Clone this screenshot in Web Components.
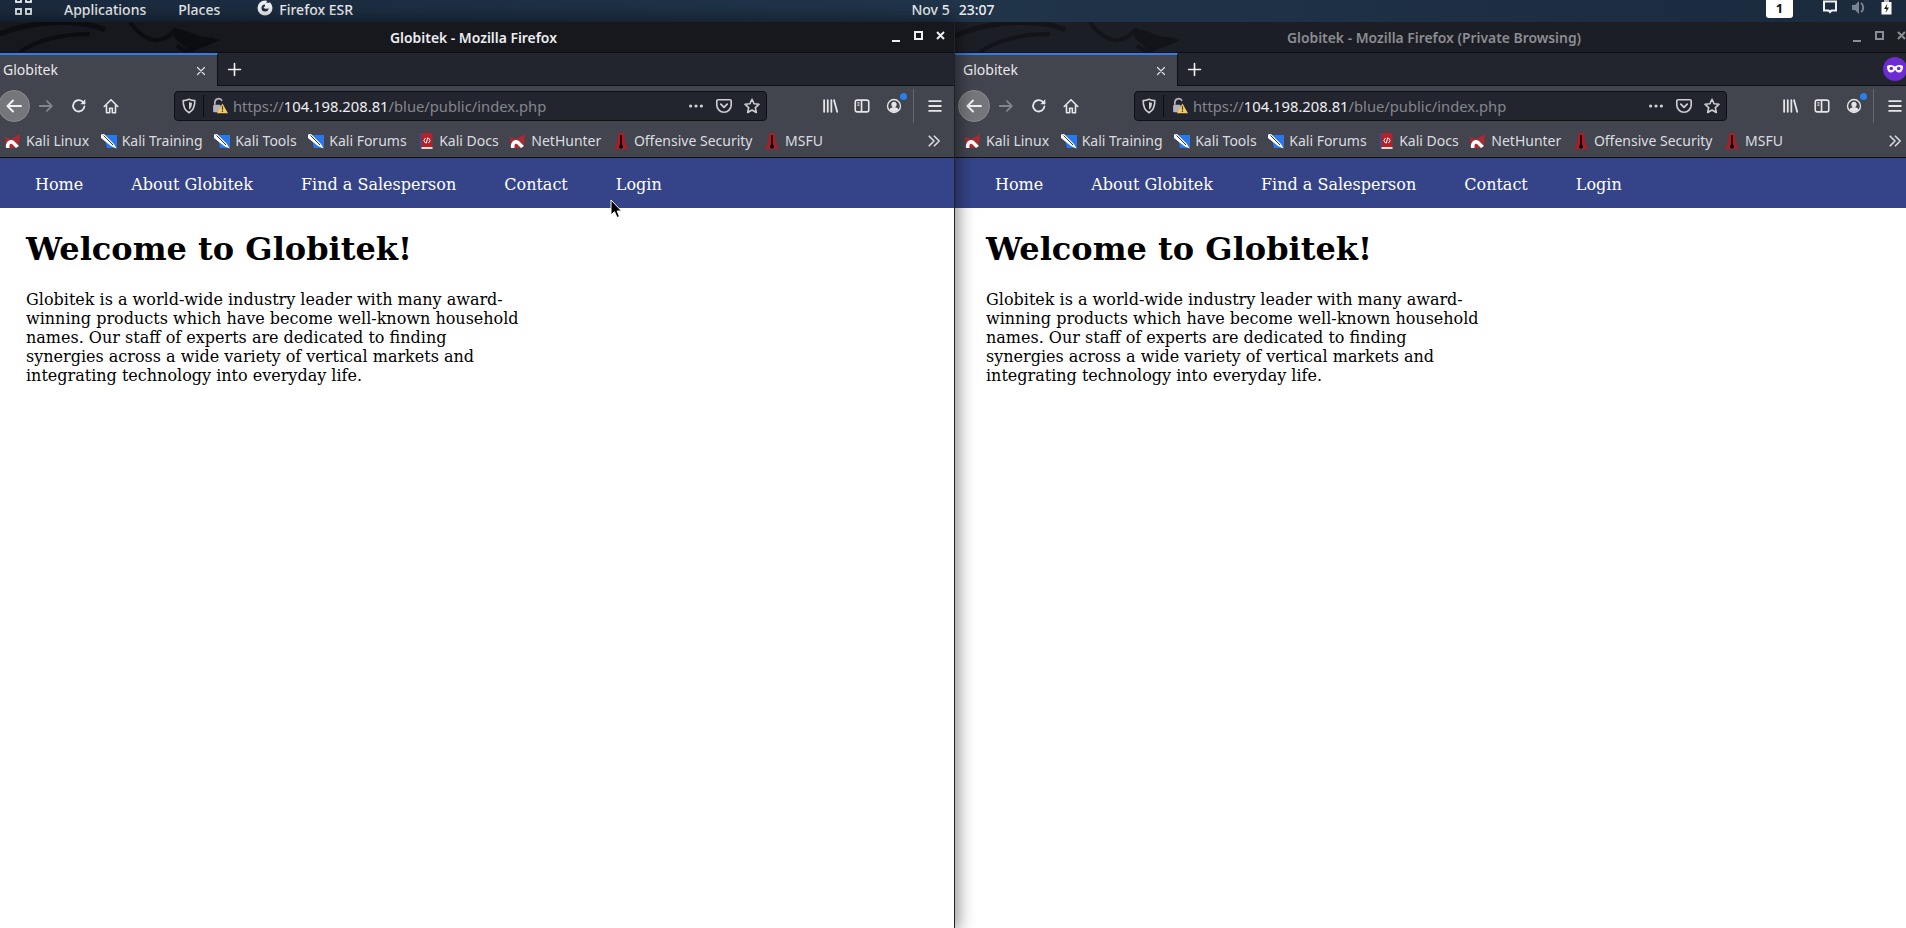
<!DOCTYPE html>
<html><head><meta charset="utf-8"><title>Globitek</title>
<style>
html,body{margin:0;padding:0;width:1906px;height:928px;overflow:hidden;background:#1c2a3c}
desktop-screen{display:block}
</style></head><body>
<desktop-screen>
  <top-panel></top-panel>
  <browser-window style="left:955px;top:22px;z-index:1" wintitle="Globitek - Mozilla Firefox (Private Browsing)" private></browser-window>
  <browser-window style="left:-5px;top:22px;z-index:2" wintitle="Globitek - Mozilla Firefox" active></browser-window>
  <mouse-cursor></mouse-cursor>
</desktop-screen>
<script>
const UI='"Noto Sans","Open Sans",sans-serif';
const ICONS={
 back:'<path d="M17 10H4M9 4.500 3.500 10 9 15.500" fill="none" stroke="currentColor" stroke-width="2" stroke-linecap="round" stroke-linejoin="round"/>',
 forward:'<path d="M3 10h13M11 4.500 16.500 10 11 15.500" fill="none" stroke="currentColor" stroke-width="2" stroke-linecap="round" stroke-linejoin="round"/>',
 reload:'<path d="M16 10.500A6.300 6.300 0 1 1 13.800 5L16 7" fill="none" stroke="currentColor" stroke-width="2" stroke-linecap="round"/><path d="M17 2.500V8h-5.500z" fill="currentColor"/>',
 home:'<path d="M2.500 10.500 10 3l7.500 7.500M5 9v8.500h3.500V12.500h3v5H15V9" fill="none" stroke="currentColor" stroke-width="1.800" stroke-linejoin="round" stroke-linecap="round"/>',
 shield:'<path d="M10 2.500c2.500 1.300 4.500 1.500 6.500 1.500 0 6.500-1.500 11-6.500 13.500C5 15 3.500 10.500 3.500 4c2 0 4-.2 6.500-1.500z" fill="none" stroke="currentColor" stroke-width="1.800" stroke-linejoin="round"/><path d="M10 5.500c1.200.6 2.200.8 3.300.8 0 3.700-.9 6-3.300 7.700z" fill="currentColor"/>',
 lock:'<path d="M4.500 9V6.500a4.500 4.500 0 0 1 8.500-2" fill="none" stroke="#b4b5ba" stroke-width="2"/><rect x="2.500" y="9" width="9" height="9" rx="1.500" fill="#b4b5ba"/><path d="M13.500 7.500 20 19H7z" fill="#f7c95c"/><path d="M13.500 11v4M13.500 16v1.500" stroke="#4a3a10" stroke-width="1.400"/>',
 dots:'<circle cx="4" cy="10" r="1.800" fill="currentColor"/><circle cx="10" cy="10" r="1.800" fill="currentColor"/><circle cx="16" cy="10" r="1.800" fill="currentColor"/>',
 pocket:'<path d="M3.500 3h13A1.500 1.500 0 0 1 18 4.500V9a8 8 0 0 1-16 0V4.500A1.500 1.500 0 0 1 3.500 3z" fill="none" stroke="currentColor" stroke-width="1.800"/><path d="M6.500 8 10 11.500 13.500 8" fill="none" stroke="currentColor" stroke-width="2" stroke-linecap="round" stroke-linejoin="round"/>',
 star:'<path d="M10 2.500l2.300 5 5.400.6-4 3.700 1.100 5.400-4.800-2.700-4.800 2.700 1.100-5.400-4-3.700 5.400-.6z" fill="none" stroke="currentColor" stroke-width="1.800" stroke-linejoin="round"/>',
 library:'<path d="M3.500 3.500v13M7.500 3.500v13M11.500 3.500v13M14.500 3.500l3.500 13" fill="none" stroke="currentColor" stroke-width="2" stroke-linecap="round"/>',
 sidebar:'<rect x="2.500" y="3.500" width="15" height="13" rx="2" fill="none" stroke="currentColor" stroke-width="1.800"/><path d="M9.500 3.500v13" stroke="currentColor" stroke-width="1.800"/><path d="M4.800 6.500h2.400M4.800 9h2.400" stroke="currentColor" stroke-width="1.400"/>',
 account:'<circle cx="10" cy="10" r="7.200" fill="none" stroke="currentColor" stroke-width="1.500"/><circle cx="10" cy="8.300" r="2.900" fill="currentColor"/><path d="M4.800 14.300c1-2.500 3-3.300 5.200-3.300s4.200.8 5.200 3.300A7 7 0 0 1 10 16.800a7 7 0 0 1-5.200-2.500z" fill="currentColor"/>',
 menu:'<path d="M3.500 4.500h13M3.500 10h13M3.500 15.500h13" stroke="currentColor" stroke-width="2" stroke-linecap="round"/>',
 more:'<path d="M4 4l6 6-6 6M10.500 4l6 6-6 6" fill="none" stroke="currentColor" stroke-width="2" stroke-linecap="round" stroke-linejoin="round"/>',
 close:'<path d="M5 5l10 10M15 5 5 15" stroke="currentColor" stroke-width="1.800" stroke-linecap="round"/>',
 plus:'<path d="M10 3v14M3 10h14" stroke="currentColor" stroke-width="1.900" stroke-linecap="round"/>',
 kali:'<path d="M0 4 6 6l9-5-1 11-4 3H1z" fill="#a92a33"/><path d="M1 15C0 9 5 5 9 8l5 5-3 2-4-4C5.500 10 4 11 4.500 15z" fill="#fff"/>',
 tool:'<path d="M3 2h13v13H6z" fill="#2a79ec"/><path d="M0 1.500 3 1 13 11l2.500 4.500L10 13 0 5z" fill="#fff"/><path d="M2.500 2.500l9.500 9.500" stroke="#334" stroke-width="1"/>',
 docs:'<rect x="1.500" y="0" width="2.500" height="16" fill="#3f4a86"/><rect x="3.500" y="0" width="11" height="15" fill="#b3222a"/><rect x="3.500" y="14" width="11" height="2" fill="#ddd"/><path d="M7.500 5 5.800 7.500l1.700 2.500M10.500 5l1.700 2.500-1.700 2.500M9.800 4.500 8.200 10.500" fill="none" stroke="#fff" stroke-width="1"/>',
 offsec:'<path d="M5 0h6l.5 8 3.500 8H1l3.500-8z" fill="#a81f2a"/><path d="M8 2v12" stroke="#000" stroke-width="1.600"/><circle cx="8" cy="13.500" r="2" fill="#000"/>'
};
function define(name,cls){customElements.define(name,cls)}

define('line-icon',class extends HTMLElement{
 connectedCallback(){
  const s=this.attachShadow({mode:'open'});
  const sz=this.getAttribute('size')||18;
  const vb=/kali|tool|docs|offsec/.test(this.getAttribute('name'))?'0 0 16 16':'0 0 20 20';
  s.innerHTML=`<style>:host{display:inline-flex;flex:none;width:${sz}px;height:${sz}px;color:inherit}svg{display:block;width:100%;height:100%}</style><svg viewBox="${vb}">${ICONS[this.getAttribute('name')]}</svg>`;
 }
});

define('top-panel',class extends HTMLElement{
 connectedCallback(){
  this.attachShadow({mode:'open'}).innerHTML=`<style>
  :host{display:grid;grid-template-columns:1fr auto 1fr;align-items:start;height:22px;box-sizing:border-box;color:#eef0f2;
    font:500 14px/19px ${UI};background:linear-gradient(90deg,#1b2a3e,#20344a 50%,#1b2a3d);overflow:hidden}
  span{white-space:nowrap}
  .l,.r{display:flex;align-items:flex-start}
  .l{padding-left:15px}
  .r{justify-content:flex-end}
  .grid{width:17px;height:16px;flex:none;margin-right:32px}
  .fx{width:16px;height:16px;margin-right:6px;flex:none}
  .a{margin-right:32px}.b{margin-right:37px}
  .clock b{font-weight:500;margin-left:9px}
  .ws{width:27px;height:18px;background:#fff;color:#111;border-radius:0 0 3px 3px;font-weight:700;text-align:center;line-height:17px;font-size:13px;margin-right:30px;flex:none}
  svg{display:block}
  .tray{display:flex;gap:15px;margin-right:14px;align-items:flex-start}
  </style>
  <div class="l">
  <svg class="grid" viewBox="0 0 17 16"><g fill="none" stroke="#eef0f2" stroke-width="1.800"><rect x="1" y="-3" width="5" height="5"/><rect x="11" y="-3" width="5" height="5"/><rect x="1" y="9" width="5" height="5"/><rect x="11" y="9" width="5" height="5"/></g></svg>
  <span class="a">Applications</span><span class="b">Places</span>
  <svg class="fx" viewBox="0 0 16 16"><circle cx="8" cy="8" r="7.500" fill="#eef0f2"/><path d="M8 4.500a3.500 3.500 0 1 0 3.500 3.500C10 9.500 7 9 6.500 7c1 .2 1.500-.5 1.500-2.500zM11 0c1 1 1.500 2 1.500 3L9 2.500z" fill="#1d2d42"/></svg>
  <span>Firefox ESR</span>
  </div>
  <span class="clock">Nov 5<b>23:07</b></span>
  <div class="r">
  <div class="ws">1</div>
  <div class="tray">
   <svg width="14" height="15" viewBox="0 0 14 15"><path d="M1 1.500h12v9H8.500L7 12l-1.500-1.500H1z" fill="none" stroke="#eef0f2" stroke-width="2"/></svg>
   <svg width="14" height="15" viewBox="0 0 14 15" style="opacity:.45"><path d="M0 5h3l4-4v13l-4-4H0z" fill="#eef0f2"/><path d="M9 3c3 2 3 7 0 9" fill="none" stroke="#eef0f2" stroke-width="2"/></svg>
   <svg width="11" height="15" viewBox="0 0 11 15"><rect x="3" y="0" width="5" height="2" fill="#bbb"/><rect x="0.500" y="2" width="10" height="12.500" fill="#fff"/><path d="M6.500 3.500 3 9h2.500L4.500 13 8 7.500H5.500z" fill="#1a1a1a"/></svg>
  </div></div>`;
 }
});

define('title-bar',class extends HTMLElement{
 connectedCallback(){
  const on=this.hasAttribute('active');
  this.attachShadow({mode:'open'}).innerHTML=`<style>
  :host{display:flex;align-items:center;justify-content:center;height:31px;box-sizing:border-box;border-bottom:1px solid #0c0d10;position:relative;overflow:hidden;
    background:${on?'#16181e':'#1c1e25'};color:${on?'#eceef0':'#8b8d92'};font:600 13.9px/18px ${UI}}
  .t{transform:translateX(-1px);margin-top:1px;position:relative}
  .d{position:absolute;left:0;top:0}
  .btns{position:absolute;right:5px;top:0;display:flex;height:30px;align-items:center;gap:6px;color:${on?'#eceef0':'#8b8d92'}}
  .btns svg{width:16px;height:16px;display:block}
  </style>
  <svg class="d" width="250" height="30" viewBox="0 0 250 30" fill="none" stroke="${on?'#0c0d11':'#131419'}"><path d="M0 14C40 -4 90 -2 110 8" stroke-width="5"/><path d="M25 30C45 16 70 12 95 12" stroke-width="4"/><path d="M135 0c12 18 30 26 45 8l16 8 24 2-12 5-16 7-10-6" stroke-width="4"/><path d="M178 7l12 2 18 7 16 2-14 6-16 4-14-12z" fill="${on?'#0c0d11':'#131419'}"/></svg>
  <span class="t">${this.getAttribute('wintitle')}</span>
  <div class="btns">
   <svg viewBox="0 0 16 16"><path d="M3 12h8" stroke="currentColor" stroke-width="2"/></svg>
   <svg viewBox="0 0 16 16"><rect x="4" y="3" width="7" height="7" fill="none" stroke="currentColor" stroke-width="2"/></svg>
   <svg viewBox="0 0 16 16"><path d="M4 3l7 7M11 3l-7 7" stroke="currentColor" stroke-width="2"/></svg>
  </div>`;
 }
});

define('tab-strip',class extends HTMLElement{
 connectedCallback(){
  const priv=this.hasAttribute('private');
  this.attachShadow({mode:'open'}).innerHTML=`<style>
  :host{display:flex;height:33px;background:#23252e;color:#f2f2f3;position:relative;font:13.3px/16px ${UI}}
  .tab{width:223px;box-sizing:border-box;background:#42444e;border-top:2px solid #2a7ef0;display:flex;align-items:center;padding:0 8px;border-right:1px solid #111}
  .tab span{flex:1;color:#e8e8ea;font-size:14px;margin-top:-2px}
  .tab line-icon{color:#dcdcde;margin-right:1px}
  .new{margin:0 0 0 8px;display:flex;align-items:center;color:#eee}
  .line{position:absolute;left:223px;right:0;bottom:0;height:1px;background:#0f1014}
  .mask{position:absolute;left:928px;top:4px;width:24px;height:24px;border-radius:50%;background:#6d2bd2}
  .mask svg{display:block}
  </style>
  <div class="tab"><span>Globitek</span><line-icon name="close" size="14"></line-icon></div>
  <div class="new"><line-icon name="plus" size="17"></line-icon></div>
  <div class="line"></div>
  ${priv?'<div class="mask"><svg width="24" height="24" viewBox="0 0 24 24"><path d="M4 9c3-1.500 5-1 8 .5 3-1.500 5-2 8-.5 0 5-2 6.500-4 6.500S13 14 12 13c-1 1-2 2.500-4 2.500S4 14 4 9z" fill="#fff"/><circle cx="8.300" cy="11.500" r="1.800" fill="#6d2bd2"/><circle cx="15.700" cy="11.500" r="1.800" fill="#6d2bd2"/></svg></div>':''}`;
 }
});

define('url-bar',class extends HTMLElement{
 connectedCallback(){
  this.attachShadow({mode:'open'}).innerHTML=`<style>
  :host{display:flex;align-items:center;width:593px;height:30px;box-sizing:border-box;background:#23252e;border:1px solid #0e0f13;border-radius:4px;color:#cfcfd2;font:14.75px/18px ${UI};flex:none;padding-left:5px}
  .sep{width:1px;height:22px;background:#0c0d10;margin:0 7px 0 5px}
  .u{flex:1;white-space:nowrap;color:#85868b;margin-left:5px}
  .u b{font-weight:400;color:#f0f0f2}
  .r{display:flex;align-items:center;gap:10px;margin-right:5px}
  </style>
  <line-icon name="shield" size="18"></line-icon><div class="sep"></div>
  <line-icon name="lock" size="17"></line-icon>
  <span class="u">https://<b>104.198.208.81</b>/blue/public/index.php</span>
  <div class="r"><line-icon name="dots" size="18"></line-icon><line-icon name="pocket" size="18"></line-icon><line-icon name="star" size="18"></line-icon></div>`;
 }
});

define('nav-toolbar',class extends HTMLElement{
 connectedCallback(){
  this.attachShadow({mode:'open'}).innerHTML=`<style>
  :host{display:flex;align-items:center;height:39px;box-sizing:border-box;padding:0 0 0 3px;color:#e6e6e8}
  .back{width:32px;height:32px;border-radius:50%;background:#75767c;border:1px solid #8b8c91;box-sizing:border-box;display:flex;align-items:center;justify-content:center;flex:none;margin-right:7px;color:#f0f0f2}
  .fwd{color:#83848a;margin-right:15px}
  .rel{margin-right:14px}
  .home{margin-right:54px}
  url-bar{margin-right:54px}
  .acct{position:relative;display:flex}
  .acct i{position:absolute;right:-4px;top:-4px;width:7px;height:7px;border-radius:50%;background:#2a7ef0}
  .lib{margin-right:14px}.sb{margin-right:14px}
  .div{width:1px;height:34px;background:#666870;margin:0 12px 0 10px}
  </style>
  <div class="back"><line-icon name="back" size="20"></line-icon></div>
  <line-icon class="fwd" name="forward" size="18"></line-icon>
  <line-icon class="rel" name="reload" size="18"></line-icon>
  <line-icon class="home" name="home" size="18"></line-icon>
  <url-bar></url-bar>
  <line-icon class="lib" name="library" size="18"></line-icon>
  <line-icon class="sb" name="sidebar" size="18"></line-icon>
  <div class="acct"><line-icon name="account" size="18"></line-icon><i></i></div>
  <div class="div"></div>
  <line-icon name="menu" size="18"></line-icon>`;
 }
});

define('book-mark',class extends HTMLElement{
 connectedCallback(){
  this.attachShadow({mode:'open'}).innerHTML=`<style>
  :host{display:inline-flex;align-items:center;gap:5px;white-space:nowrap;flex:none}
  </style><line-icon name="${this.getAttribute('icon')}" size="16"></line-icon><slot></slot>`;
 }
});

define('bookmark-bar',class extends HTMLElement{
 connectedCallback(){
  this.attachShadow({mode:'open'}).innerHTML=`<style>
  :host{display:flex;align-items:center;height:33px;box-sizing:border-box;padding-left:10px;gap:11.6px;border-bottom:1px solid #0f1014;color:#dcdde0;font:14px/16px ${UI};position:relative}
  .more{margin-left:auto;margin-right:12px;color:#dcdde0}
  </style>
  <book-mark icon="kali">Kali Linux</book-mark>
  <book-mark icon="tool">Kali Training</book-mark>
  <book-mark icon="tool">Kali Tools</book-mark>
  <book-mark icon="tool">Kali Forums</book-mark>
  <book-mark icon="docs">Kali Docs</book-mark>
  <book-mark icon="kali">NetHunter</book-mark>
  <book-mark icon="offsec">Offensive Security</book-mark>
  <book-mark icon="offsec">MSFU</book-mark>
  <line-icon class="more" name="more" size="16"></line-icon>`;
 }
});

define('site-nav',class extends HTMLElement{
 connectedCallback(){
  this.attachShadow({mode:'open'}).innerHTML=`<style>
  :host{display:flex;height:50px;align-items:center;box-sizing:border-box;background:#354488;padding:2px 0 0 40px;gap:48px;color:#fff;font:16px/19px "DejaVu Serif",serif}
  </style><span>Home</span><span>About Globitek</span><span>Find a Salesperson</span><span>Contact</span><span>Login</span>`;
 }
});

define('page-content',class extends HTMLElement{
 connectedCallback(){
  this.attachShadow({mode:'open'}).innerHTML=`<style>
  :host{display:block;padding:0 0 0 31px;color:#000;font:16px/19px "DejaVu Serif",serif}
  h1{font:700 32px/38px "DejaVu Serif",serif;margin:22px 0 0}
  p{margin:22px 0 0;width:500px}
  </style><h1>Welcome to Globitek!</h1><p>Globitek is a world-wide industry leader with many award-winning products which have become well-known household names. Our staff of experts are dedicated to finding synergies across a wide variety of vertical markets and integrating technology into everyday life.</p>`;
 }
});

define('browser-window',class extends HTMLElement{
 connectedCallback(){
  const on=this.hasAttribute('active'),pr=this.hasAttribute('private');
  this.attachShadow({mode:'open'}).innerHTML=`<style>
  :host{display:flex;flex-direction:column;position:absolute;width:960px;height:906px;background:#fff;box-sizing:border-box;
    ${on?'box-shadow:0 0 16px 3px rgba(0,0,0,.45);border-right:1px solid #222;':''}}
  .chrome{background:#42444e}
  </style>
  <title-bar wintitle="${this.getAttribute('wintitle')}" ${on?'active':''}></title-bar>
  <tab-strip ${pr?'private':''}></tab-strip>
  <div class="chrome"><nav-toolbar></nav-toolbar><bookmark-bar></bookmark-bar></div>
  <site-nav></site-nav>
  <page-content></page-content>`;
 }
});

define('mouse-cursor',class extends HTMLElement{
 connectedCallback(){
  this.attachShadow({mode:'open'}).innerHTML=`<style>:host{position:absolute;left:610px;top:199px;z-index:5;display:block;width:12px;height:20px}svg{display:block}</style>
  <svg width="12" height="20" viewBox="0 0 12 20"><path d="M1 1v15l3.500-3.300L7 18.500l2.500-1-2.400-5.500H11.500z" fill="#000" stroke="#fff" stroke-width="1"/></svg>`;
 }
});

define('desktop-screen',class extends HTMLElement{
 connectedCallback(){
  this.attachShadow({mode:'open'}).innerHTML=`<style>:host{display:block;position:relative;width:1906px;height:928px;overflow:hidden;background:#1c2a3c}</style><slot></slot>`;
 }
});
</script>
</body></html>
